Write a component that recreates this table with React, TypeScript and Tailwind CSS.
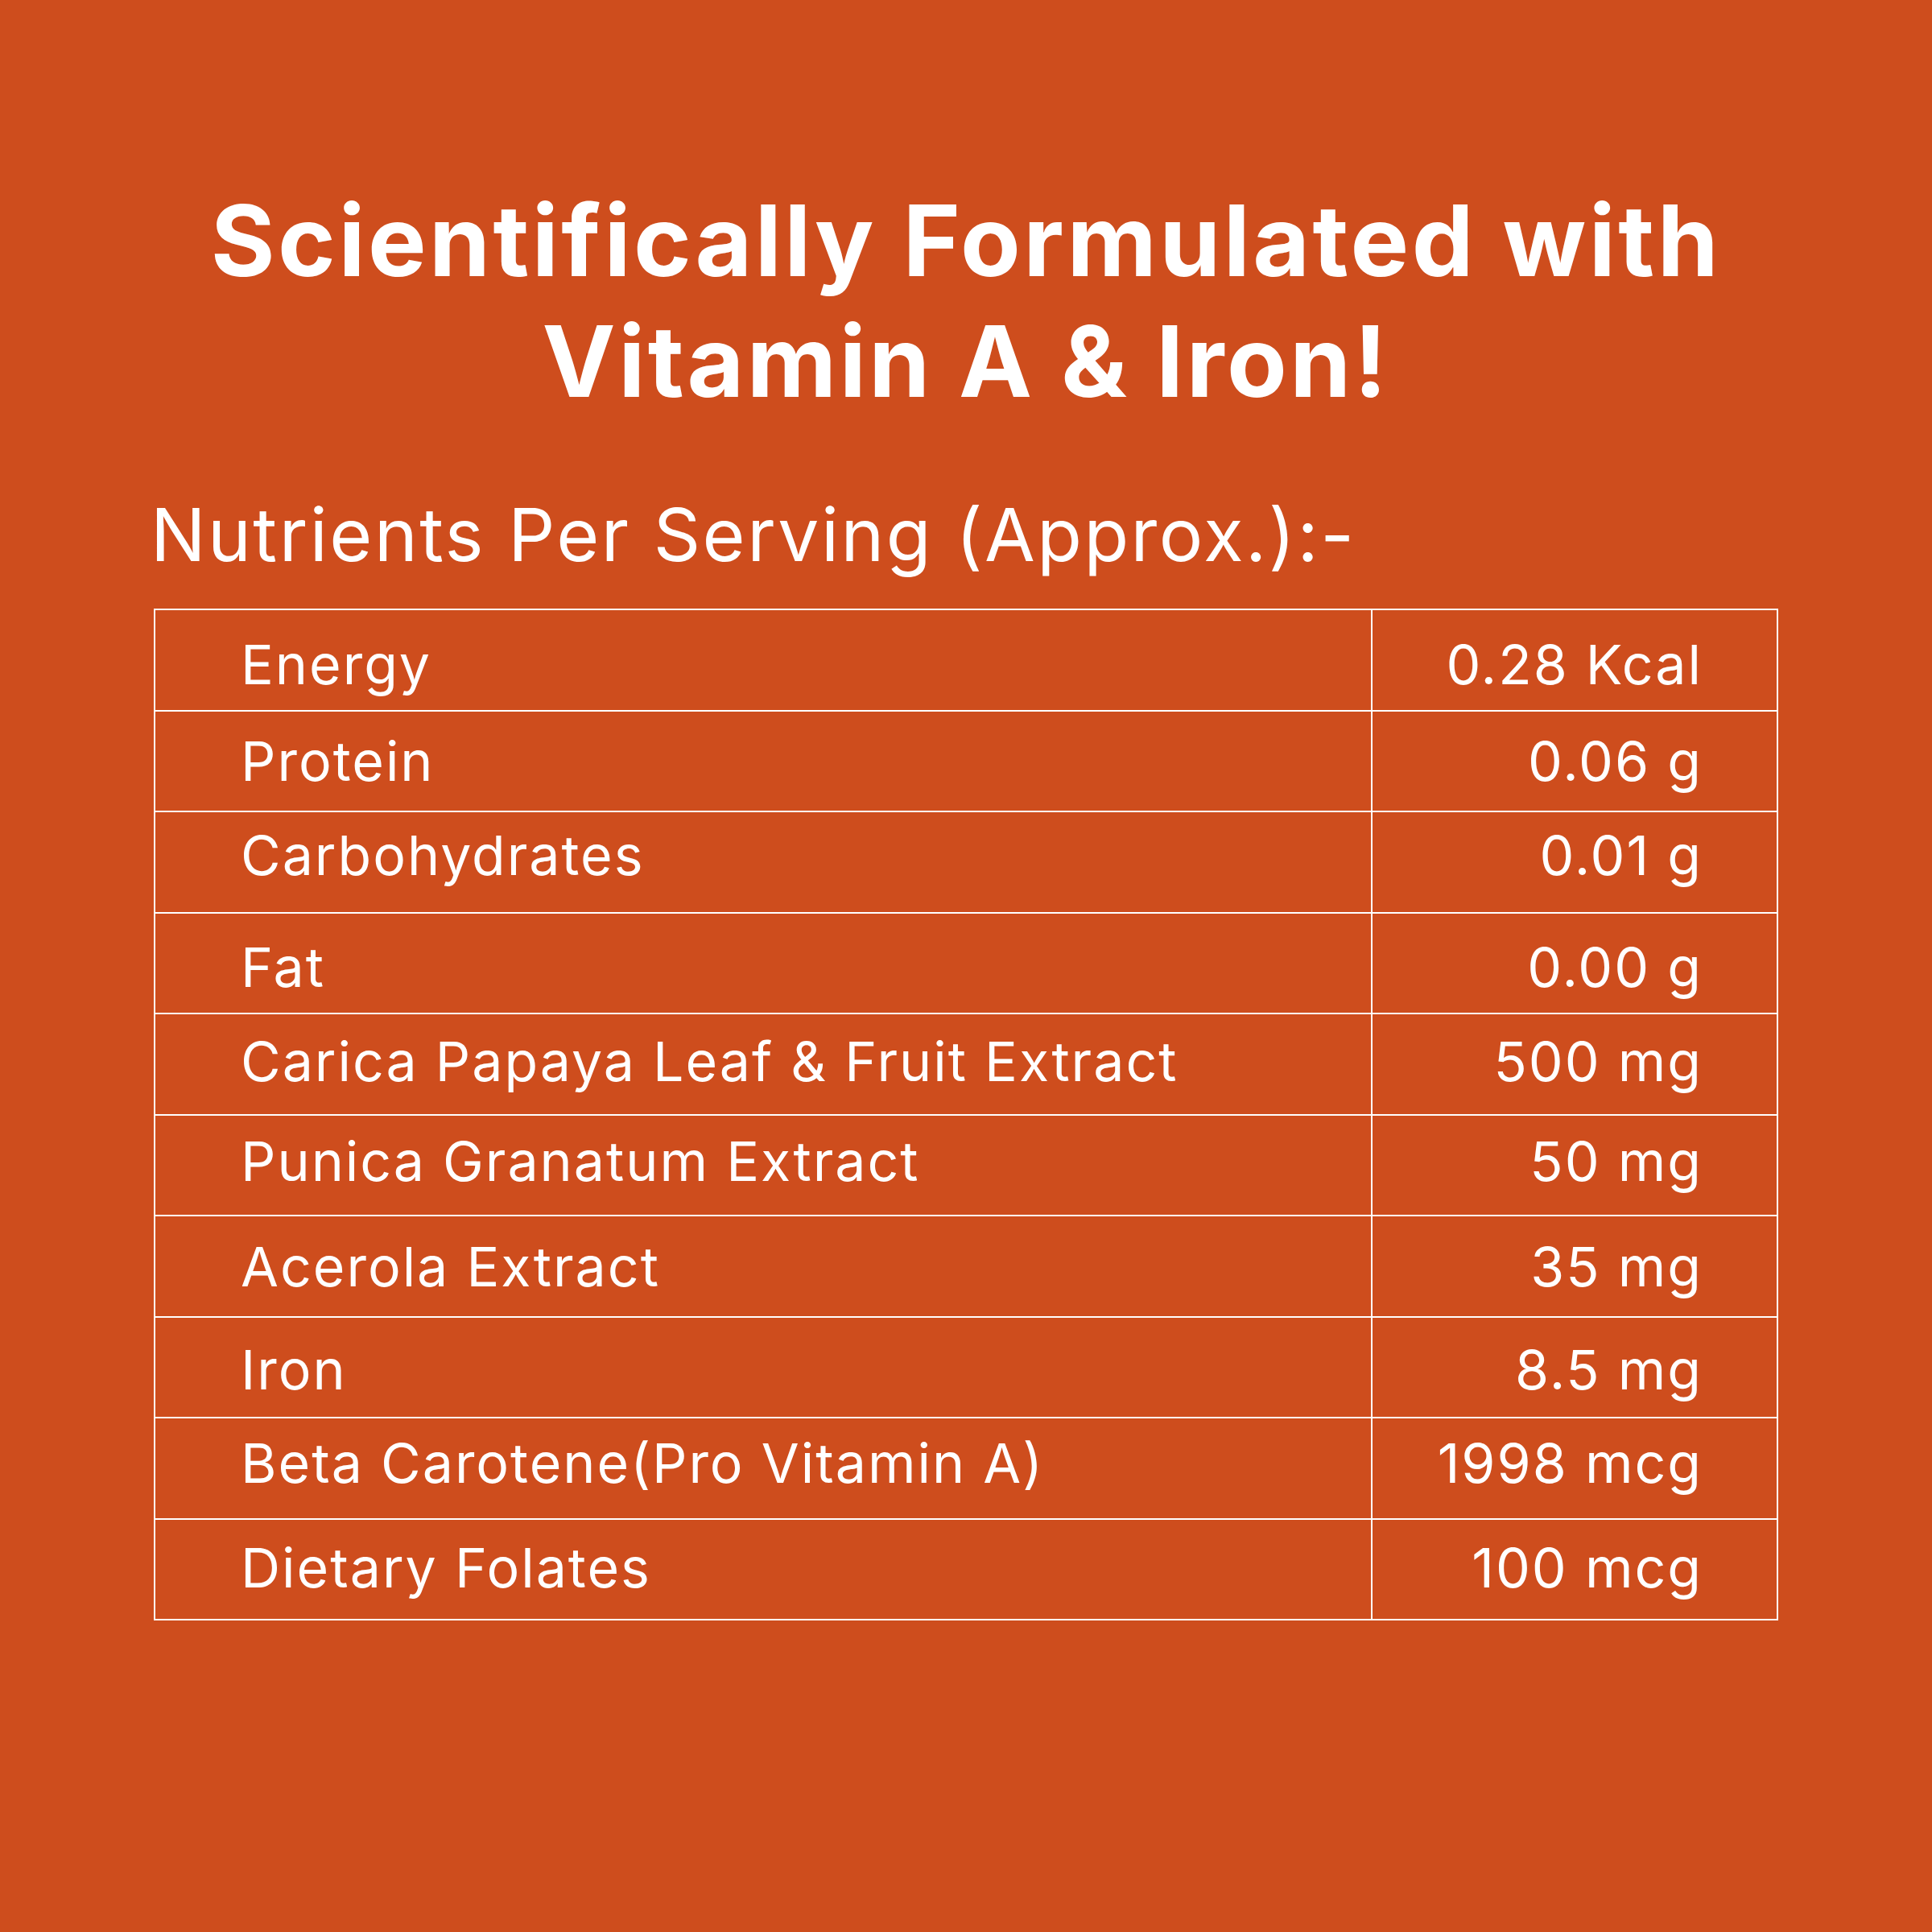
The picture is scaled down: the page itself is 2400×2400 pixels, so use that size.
// name, value, nudge to match the uneven baselines of the original artwork
const rows: [string, string, string][] = [
  ['Energy', '0.28 Kcal', 'translate-y-[6px]'],
  ['Protein', '0.06 g', 'translate-y-0'],
  ['Carbohydrates', '0.01 g', '-translate-y-[8px]'],
  ['Fat', '0.00 g', 'translate-y-[5px]'],
  ['Carica Papaya Leaf & Fruit Extract', '500 mg', '-translate-y-[3px]'],
  ['Punica Granatum Extract', '50 mg', '-translate-y-[5px]'],
  ['Acerola Extract', '35 mg', 'translate-y-[1px]'],
  ['Iron', '8.5 mg', 'translate-y-[3px]'],
  ['Beta Carotene(Pro Vitamin A)', '1998 mcg', '-translate-y-[6px]'],
  ['Dietary Folates', '100 mcg', '-translate-y-[2px]'],
];

export default function App() {
  return (
    <div className="flex h-[2400px] w-[2400px] flex-col items-center bg-[#ce4d1d] font-['Inter',sans-serif] text-white">
      <h1 className="mt-[224px] text-center text-[122px] font-bold leading-[150px] tracking-[3.5px]">
        Scientifically Formulated with
        <br />
        Vitamin A &amp; Iron!
      </h1>

      <div className="mt-[85px] flex w-[2018px] flex-col">
        <p className="-ml-[4px] text-[91px] leading-[110px] tracking-[2.5px]">Nutrients Per Serving (Approx.):-</p>

        {/* nutrient table */}
        <div className="mt-[37px] flex flex-col border-x-2 border-b-2 border-white">
          {rows.map(([name, value, nudge]) => (
            <div key={name} className="flex h-[125.5px] border-t-2 border-white text-[68px] leading-[123px] tracking-[2px]">
              <div className="w-[1512px] border-r-2 border-white pl-[106px]">
                <span className={`block ${nudge}`}>{name}</span>
              </div>
              <div className="flex-1 pr-[92px] text-right">
                <span className={`block ${nudge}`}>{value}</span>
              </div>
            </div>
          ))}
        </div>
      </div>
    </div>
  );
}
